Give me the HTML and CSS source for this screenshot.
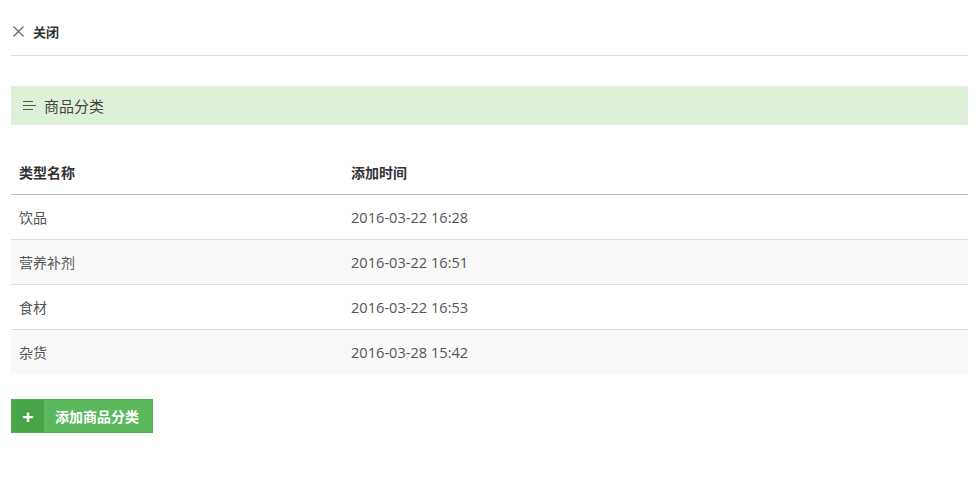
FILE: index.html
```html
<!DOCTYPE html>
<html lang="zh-CN">
<head>
    <meta charset="UTF-8">
    <title>商品分类</title>
    <link rel="stylesheet" href="styles.css">
</head>
<body>
    <div class="topbar">
        <a class="close" href="#">
            <svg class="close-icon" width="11" height="11" viewBox="0 0 11 11"><path d="M0.5 0.5L10.5 10.5M10.5 0.5L0.5 10.5" stroke="#666" stroke-width="1.2" fill="none"/></svg>
            <span>关闭</span>
        </a>
    </div>

    <div class="panel-title">
        <svg class="list-icon" width="14" height="11" viewBox="0 0 14 11"><path d="M0 1.5H10M0 5.5H13M0 9.5H10" stroke="#555" stroke-width="1.2" fill="none"/></svg>
        <span>商品分类</span>
    </div>

    <table class="cat-table">
        <thead>
            <tr><th class="col-name">类型名称</th><th>添加时间</th></tr>
        </thead>
        <tbody>
            <tr><td>饮品</td><td class="date">2016-03-22 16:28</td></tr>
            <tr><td>营养补剂</td><td class="date">2016-03-22 16:51</td></tr>
            <tr><td>食材</td><td class="date">2016-03-22 16:53</td></tr>
            <tr><td>杂货</td><td class="date">2016-03-28 15:42</td></tr>
        </tbody>
    </table>

    <a class="add-btn" href="#">
        <span class="add-btn-icon">+</span>
        <span class="add-btn-text">添加商品分类</span>
    </a>
</body>
</html>
```

FILE: styles.css
```css
body {
    margin: 0;
    padding: 0 12px 0 11px;
    font-family: "Open Sans", "Noto Sans CJK SC", sans-serif;
    font-size: 14px;
    color: #555;
    background: #fff;
}
.topbar {
    height: 55px;
    border-bottom: 1px solid #ddd;
    display: flex;
    align-items: center;
}
.close {
    display: flex;
    align-items: center;
    gap: 9px;
    padding-left: 2px;
    margin-top: 8px;
    color: #333;
    font-size: 13px;
    font-weight: bold;
    text-decoration: none;
}
.panel-title {
    margin-top: 30px;
    height: 39px;
    background: #dff0d8;
    display: flex;
    align-items: center;
    padding-left: 12px;
    font-size: 15px;
    color: #444;
}
.list-icon {
    margin-right: 7px;
}
.cat-table {
    width: 100%;
    margin-top: 25px;
    border-collapse: collapse;
}
.cat-table th {
    text-align: left;
    height: 44px;
    padding: 0 8px;
    font-weight: bold;
    color: #333;
    border-bottom: 1px solid #bbb;
}
.cat-table th.col-name {
    width: 316px;
}
.cat-table td {
    height: 44px;
    padding: 0 8px;
    border-top: 1px solid #ddd;
}
.cat-table tbody tr:first-child td {
    border-top: none;
}
.cat-table tbody tr:nth-child(even) {
    background: #f9f9f9;
}
.cat-table td.date {
    font-size: 14.6px;
}
.add-btn {
    display: inline-flex;
    margin-top: 25px;
    height: 34px;
    border: 1px solid #4cae4c;
    box-sizing: border-box;
    text-decoration: none;
    color: #fff;
    font-weight: bold;
}
.add-btn-icon {
    width: 32px;
    background: #47a447;
    display: flex;
    align-items: center;
    justify-content: center;
    font-size: 20px;
    font-weight: bold;
}
.add-btn-text {
    background: #5cb85c;
    display: flex;
    align-items: center;
    padding: 0 13px 0 11px;
    font-size: 14px;
}
```
